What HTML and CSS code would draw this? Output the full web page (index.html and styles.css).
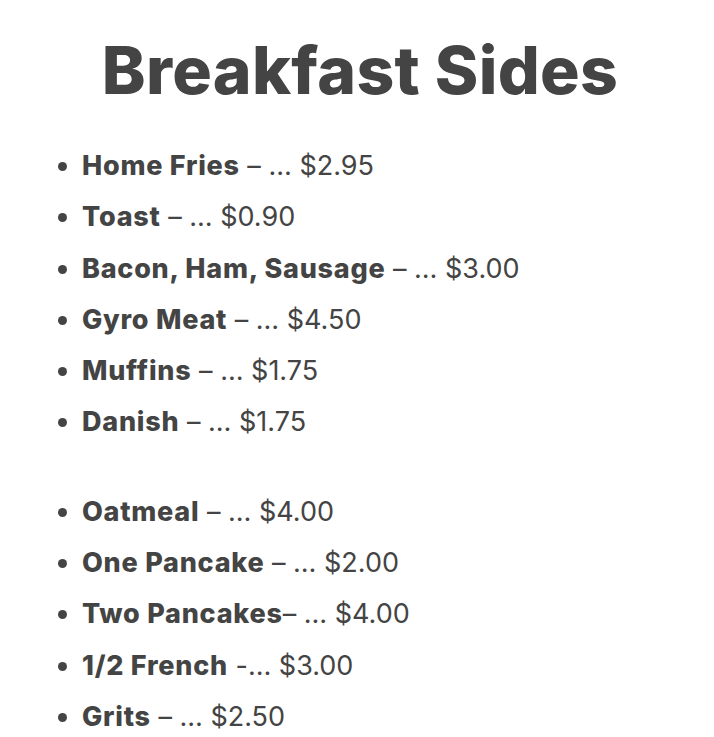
FILE: index.html
```html
<!DOCTYPE html>
<html>
<head>
<meta charset="utf-8">
<link rel="stylesheet" href="styles.css">
</head>
<body>
<main class="menu">
  <h1 class="title">Breakfast Sides</h1>
  <ul class="items">
    <li><b>Home Fries</b> – … $2.95</li>
    <li><b>Toast</b> – … $0.90</li>
    <li><b>Bacon, Ham, Sausage</b> – … $3.00</li>
    <li><b>Gyro Meat</b> – … $4.50</li>
    <li><b>Muffins</b> – … $1.75</li>
    <li><b>Danish</b> – … $1.75</li>
  </ul>
  <ul class="items">
    <li><b>Oatmeal</b> – … $4.00</li>
    <li><b>One Pancake</b> – … $2.00</li>
    <li><b>Two Pancakes</b>– … $4.00</li>
    <li><b>1/2 French</b> -… $3.00</li>
    <li><b>Grits</b> – … $2.50</li>
  </ul>
</main>
</body>
</html>
```
FILE: styles.css
```css
html, body {
  margin: 0;
  padding: 0;
  background: #fff;
}
.menu {
  font-family: Inter, "Noto Sans", sans-serif;
  color: #444;
  padding-top: 30px;
}
.title {
  margin: 0;
  text-align: center;
  font-size: 66px;
  font-weight: 800;
  letter-spacing: 0.3px;
  line-height: 80px;
  padding-left: 6px;
}
.items {
  margin: 0;
  padding: 0 0 0 82px;
  font-size: 27px;
  line-height: 51.3px;
}
.items:first-of-type {
  margin-top: 30px;
}
.items + .items {
  margin-top: 38px;
}
.items b {
  font-weight: 800;
  letter-spacing: 0.75px;
}
```
